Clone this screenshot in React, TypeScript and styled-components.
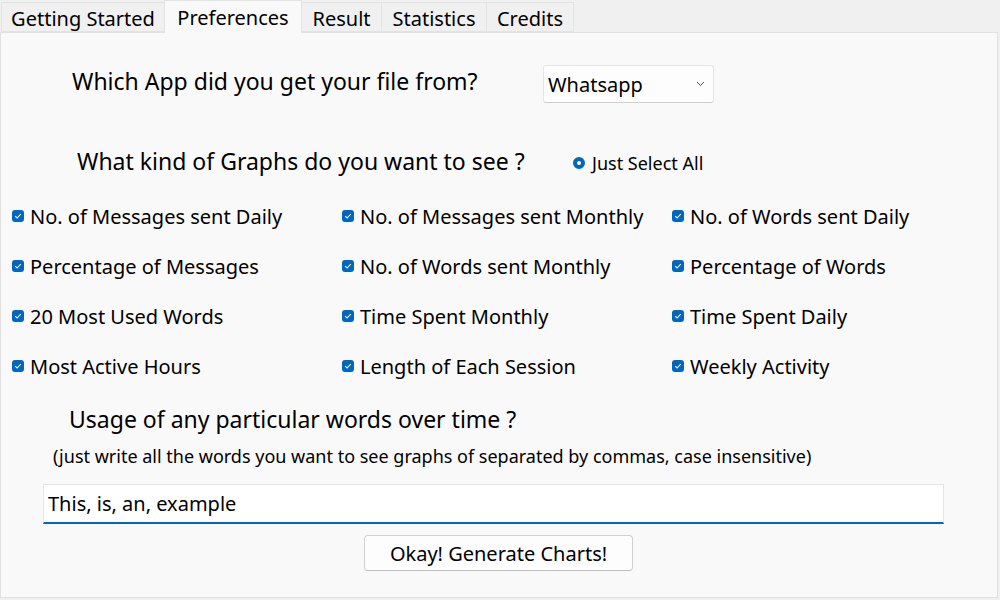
import React from 'react'
import styled, { createGlobalStyle } from 'styled-components'

const GlobalStyle = createGlobalStyle`
    html, body {
        margin: 0;
        padding: 0;
        background: #f0f0f0;
        font-family: "Noto Sans", "Open Sans", sans-serif;
        color: #000;
    }
`;

const Window = styled.div`
    width: 1000px;
    height: 600px;
    background: #f0f0f0;
    display: flex;
    flex-direction: column;
`;

const TabBar = styled.div`
    display: flex;
    align-items: flex-end;
    height: 32px;
    padding-left: 2px;
    position: relative;
    z-index: 1;
`;

const Tab = styled.div<{ $active?: boolean; $w: number }>`
    box-sizing: border-box;
    width: ${p => p.$w}px;
    height: ${p => (p.$active ? 33 : 30)}px;
    margin-bottom: ${p => (p.$active ? -1 : 0)}px;
    background: ${p => (p.$active ? '#f9f9f9' : '#f0f0f0')};
    border: 1px solid #e3e3e3;
    border-bottom: ${p => (p.$active ? 'none' : '1px solid #e3e3e3')};
    margin-left: -1px;
    display: flex;
    align-items: center;
    justify-content: center;
    font-size: 20px;
    padding-top: ${p => (p.$active ? 0 : 2)}px;
`;

const Panel = styled.div`
    box-sizing: border-box;
    width: 998px;
    height: 566px;
    background: #f9f9f9;
    border: 1px solid #e0e0e0;
    padding: 32px 0 0 11px;
    display: flex;
    flex-direction: column;
`;

const AppRow = styled.div`
    display: flex;
    align-items: center;
    height: 38px;
`;

const Question = styled.div<{ $indent: number; $width?: number; $lift?: number }>`
    font-size: 23px;
    padding-left: ${p => p.$indent}px;
    padding-bottom: ${p => p.$lift ?? 0}px;
    width: ${p => (p.$width ? `${p.$width}px` : 'auto')};
    box-sizing: border-box;
    white-space: nowrap;
`;

const Select = styled.div`
    box-sizing: border-box;
    width: 171px;
    height: 38px;
    background: #fdfdfd;
    border: 1px solid #e5e5e5;
    border-bottom-color: #cfcfcf;
    border-radius: 3px;
    display: flex;
    align-items: center;
    justify-content: space-between;
    padding: 0 8px 0 4px;
    font-size: 20px;
`;

const QuestionRow = styled.div<{ $gap: number }>`
    display: flex;
    align-items: center;
    height: 30px;
    margin-top: ${p => p.$gap}px;
`;

const RadioLabel = styled.label`
    display: flex;
    align-items: center;
    gap: 7px;
    font-size: 18px;
    margin-top: 4px;
`;

const RadioDot = styled.span`
    box-sizing: border-box;
    width: 12px;
    height: 12px;
    border-radius: 50%;
    border: 4px solid #0067c0;
    background: #fff;
`;

const Grid = styled.div`
    display: grid;
    grid-template-columns: repeat(3, 330px);
    grid-auto-rows: 50px;
    margin-top: 15px;
`;

const CheckItem = styled.label`
    display: flex;
    align-items: center;
    gap: 6px;
    font-size: 20px;
    white-space: nowrap;
`;

const CheckBox = styled.span`
    width: 12px;
    height: 12px;
    border-radius: 3px;
    background: #0067c0;
    display: flex;
    align-items: center;
    justify-content: center;
`;

const Note = styled.div`
    font-size: 18px;
    padding-left: 41px;
    height: 24px;
    display: flex;
    align-items: center;
    margin-top: 10px;
    white-space: nowrap;
`;

const WordsInput = styled.div`
    box-sizing: border-box;
    width: 901px;
    height: 40px;
    margin: 16px 0 0 31px;
    background: #fff;
    border: 1px solid #e5e5e5;
    border-bottom: 2px solid #0067c0;
    display: flex;
    align-items: center;
    padding: 0 4px;
    font-size: 20px;
`;

const Button = styled.button`
    box-sizing: border-box;
    width: 269px;
    height: 36px;
    margin: 11px 0 0 352px;
    background: #fdfdfd;
    border: 1px solid #d0d0d0;
    border-bottom-color: #c0c0c0;
    border-radius: 4px;
    font-family: inherit;
    font-size: 20px;
    color: #000;
    padding: 0;
`;

const tabs = [
    { name: 'Getting Started', w: 164 },
    { name: 'Preferences', w: 138, active: true },
    { name: 'Result', w: 81 },
    { name: 'Statistics', w: 106 },
    { name: 'Credits', w: 88 },
]

const graphs = [
    'No. of Messages sent Daily', 'No. of Messages sent Monthly', 'No. of Words sent Daily',
    'Percentage of Messages', 'No. of Words sent Monthly', 'Percentage of Words',
    '20 Most Used Words', 'Time Spent Monthly', 'Time Spent Daily',
    'Most Active Hours', 'Length of Each Session', 'Weekly Activity',
]

const Check = () => (
    <CheckBox>
        <svg width="8" height="8" viewBox="0 0 8 8">
            <path d="M1.2 4.2 L3.1 6 L6.8 2" stroke="#fff" strokeWidth="1.1" fill="none" />
        </svg>
    </CheckBox>
)

const App = () => {
    return (
        <Window>
            <GlobalStyle />
            <TabBar>
                {tabs.map(t => (
                    <Tab key={t.name} $active={t.active} $w={t.w}>{t.name}</Tab>
                ))}
            </TabBar>
            <Panel>
                <AppRow>
                    <Question $indent={60} $width={531} $lift={6}>Which App did you get your file from?</Question>
                    <Select>
                        Whatsapp
                        <svg width="9" height="6" viewBox="0 0 9 6">
                            <path d="M1 1 L4.5 4.5 L8 1" stroke="#555" strokeWidth="1" fill="none" />
                        </svg>
                    </Select>
                </AppRow>
                <QuestionRow $gap={43}>
                    <Question $indent={65} $width={561}>What kind of Graphs do you want to see ?</Question>
                    <RadioLabel>
                        <RadioDot />
                        Just Select All
                    </RadioLabel>
                </QuestionRow>
                <Grid>
                    {graphs.map(g => (
                        <CheckItem key={g}>
                            <Check />
                            {g}
                        </CheckItem>
                    ))}
                </Grid>
                <QuestionRow $gap={13}>
                    <Question $indent={57}>Usage of any particular words over time ?</Question>
                </QuestionRow>
                <Note>(just write all the words you want to see graphs of separated by commas, case insensitive)</Note>
                <WordsInput>This, is, an, example</WordsInput>
                <Button>Okay! Generate Charts!</Button>
            </Panel>
        </Window>
    )
}

export default App
